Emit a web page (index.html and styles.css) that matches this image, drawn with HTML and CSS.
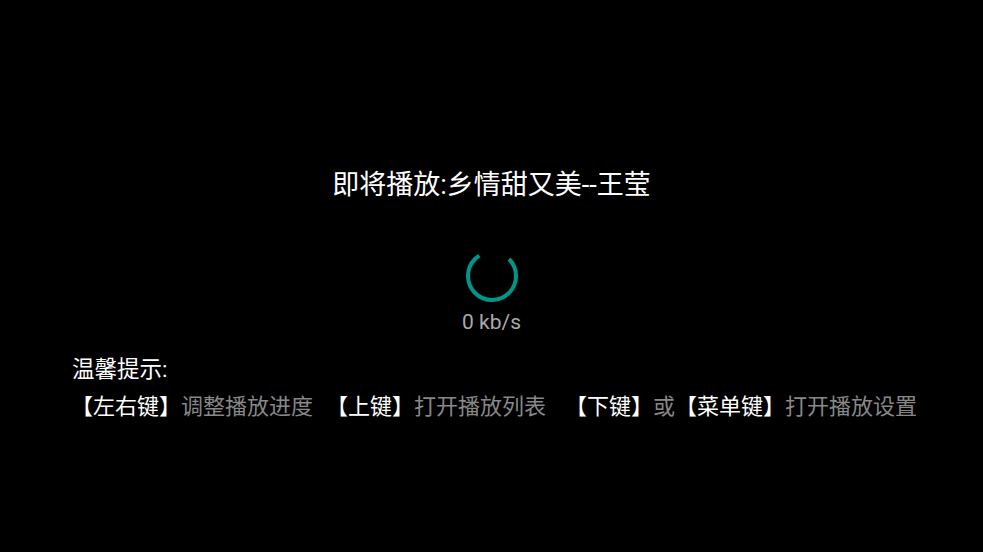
FILE: index.html
```html
<!DOCTYPE html>
<html lang="zh">
<head>
<meta charset="utf-8">
<link rel="stylesheet" href="styles.css">
</head>
<body>
<div class="screen">
  <div class="center">
    <div class="title">即将播放:乡情甜又美--王莹</div>
    <svg class="spinner" width="52" height="52" viewBox="0 0 52 52">
      <circle cx="26" cy="26" r="24" fill="none" stroke="#009688" stroke-width="4" stroke-dasharray="118 33" transform="rotate(-45 26 26)"/>
    </svg>
    <div class="speed">0 kb/s</div>
  </div>
  <div class="hints">
    <div class="hint-label">温馨提示:</div>
    <div class="hint-line">
      <span class="group"><span class="key">【左右键】</span><span class="desc">调整播放进度</span></span>
      <span class="group g2"><span class="key">【上键】</span><span class="desc">打开播放列表</span></span>
      <span class="group g3"><span class="key">【下键】</span><span class="desc">或</span><span class="key">【菜单键】</span><span class="desc">打开播放设置</span></span>
    </div>
  </div>
</div>
</body>
</html>
```
FILE: styles.css
```css
html, body {
  margin: 0;
  padding: 0;
  background: #000;
}
body {
  width: 983px;
  height: 552px;
  overflow: hidden;
  font-family: Roboto, "Noto Sans CJK SC", sans-serif;
}
.screen {
  display: flex;
  flex-direction: column;
  padding-top: 169px;
}
.center {
  display: flex;
  flex-direction: column;
  align-items: center;
}
.title {
  color: #fff;
  font-size: 27px;
  line-height: 32px;
}
.spinner {
  display: block;
  margin-top: 49px;
}
.speed {
  margin-top: 8px;
  color: #aaa;
  font-size: 21px;
  line-height: 25px;
}
.hints {
  margin-top: 16px;
  padding-left: 72px;
}
.hint-label {
  color: #fff;
  font-size: 22.5px;
  line-height: 37px;
}
.hint-line {
  display: flex;
  font-size: 22px;
  line-height: 37px;
  white-space: nowrap;
  margin-left: -1px;
}
.g2 {
  margin-left: 13px;
}
.g3 {
  margin-left: 19px;
}
.key {
  color: #fff;
}
.desc {
  color: #888;
}
```
